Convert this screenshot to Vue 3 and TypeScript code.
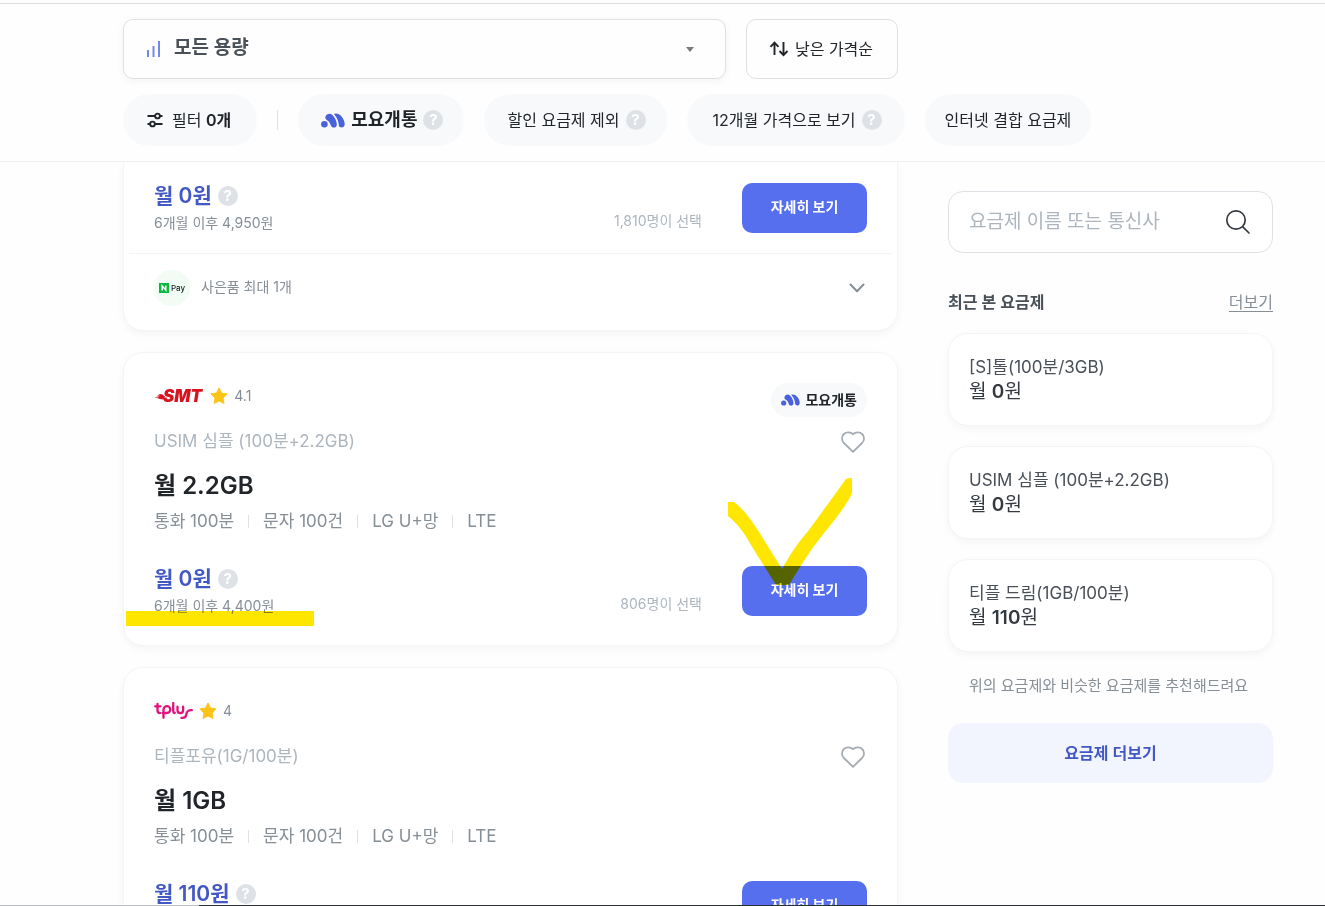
<script setup lang="ts">
import { ref } from 'vue'

interface Plan {
  brand: 'smt' | 'tplus'
  rating: string
  name: string
  data: string
  specs: string[]
  price: string
  after: string
  chosen: string
  moyo: boolean
}

const query = ref('')
const capacity = ref('all')

const plans: Plan[] = [
  {
    brand: 'smt', rating: '4.1', name: 'USIM 심플 (100분+2.2GB)', data: '월 2.2GB',
    specs: ['통화 100분', '문자 100건', 'LG U+망', 'LTE'],
    price: '월 0원', after: '6개월 이후 4,400원', chosen: '806명이 선택', moyo: true,
  },
  {
    brand: 'tplus', rating: '4', name: '티플포유(1G/100분)', data: '월 1GB',
    specs: ['통화 100분', '문자 100건', 'LG U+망', 'LTE'],
    price: '월 110원', after: '', chosen: '', moyo: false,
  },
]

const recent = [
  { name: '[S]톨(100분/3GB)', price: '0' },
  { name: 'USIM 심플 (100분+2.2GB)', price: '0' },
  { name: '티플 드림(1GB/100분)', price: '110' },
]
</script>

<template>
  <div class="page">
    <svg class="defs" aria-hidden="true">
      <symbol id="moyo" viewBox="0 0 24 15">
        <circle cx="3.400" cy="11.300" r="3.300" />
        <path d="M4.500 3.500C5.600.8 8.700-.2 10.900 1.600C13.600 3.900 16 8.500 15.800 11.700C15.700 15 11.200 15.700 10 12.800C9 10.200 8.300 8.500 6 7.200C4.500 6.300 4 5 4.500 3.500Z" />
        <path d="M12.900 1C14.200.1 16.300.4 18.200 1.500C21.300 3.400 23.700 7.600 23.700 11.200C23.700 14.500 19.600 15.600 17.900 13C17.900 9.400 16.500 5 12.900 1Z" />
      </symbol>
      <symbol id="heart" viewBox="0 0 24 22">
        <path d="M12 20.800L2.900 12C.4 9.400.4 5.300 2.800 3C5.300.6 9.700.8 12 3.200C14.300.8 18.700.6 21.200 3C23.600 5.300 23.600 9.400 21.100 12Z" fill="none" stroke="currentColor" stroke-width="1.800" stroke-linejoin="round" />
      </symbol>
    </svg>

    <header class="filters">
      <div class="row">
        <div class="capacity">
          <svg width="15" height="16" viewBox="0 0 15 16" aria-hidden="true">
            <path d="M2 9v7M7.500 5v11M13 0v16" stroke="#7489ee" stroke-width="2" />
          </svg>
          <select v-model="capacity" aria-label="용량">
            <option value="all">모든 용량</option>
          </select>
          <svg class="caret" width="8" height="5" viewBox="0 0 8 5" aria-hidden="true"><path d="M0 0h8L4 5Z" fill="#777b80" /></svg>
        </div>
        <button class="sort" type="button">
          <svg width="20" height="16" viewBox="0 0 20 16" fill="none" stroke="#212529" stroke-width="1.900" aria-hidden="true">
            <path d="M5.500 14V1.800M1.500 5.800l4-4.200 4 4.200M14.500 1v13.200M10.500 10l4 4.200 4-4.200" />
          </svg>
          낮은 가격순
        </button>
      </div>
      <div class="row chips">
        <button class="chip filter" type="button">
          <svg width="16" height="16" viewBox="0 0 16 16" fill="none" stroke="#212529" stroke-width="1.900" aria-hidden="true">
            <path d="M.5 4h7.500M13 4h2.500M.5 12h2.500M8 12h7.500" /><circle cx="10.500" cy="4" r="2.400" /><circle cx="5.500" cy="12" r="2.400" />
          </svg>
          <span>필터 <b>0개</b></span>
        </button>
        <span class="bar"></span>
        <button class="chip" type="button">
          <svg class="mark" width="24" height="15" aria-hidden="true"><use href="#moyo" /></svg>
          <b class="moyo-name">모요개통</b><i class="help">?</i>
        </button>
        <button class="chip" type="button">할인 요금제 제외<i class="help">?</i></button>
        <button class="chip wide" type="button">12개월 가격으로 보기<i class="help">?</i></button>
        <button class="chip plain" type="button">인터넷 결합 요금제</button>
      </div>
    </header>

    <div class="content">
      <main>
        <article class="card continued">
          <div class="buy">
            <div class="cost">
              <p class="price">월 0원<i class="help">?</i></p>
              <p class="after">6개월 이후 4,950원</p>
            </div>
            <span class="chosen">1,810명이 선택</span>
            <button class="detail" type="button">자세히 보기</button>
          </div>
          <button class="gift" type="button">
            <span class="npay"><svg width="10" height="10" viewBox="0 0 10 10" aria-hidden="true"><path d="M0 0h10v10H0Z" fill="#09b83e" /><path d="M3.200 7.500V3L6.800 7V2.500" fill="none" stroke="#fff" stroke-width="1.500" /></svg>Pay</span>
            <span class="gift-text">사은품 최대 1개</span>
            <svg width="16" height="10" viewBox="0 0 16 10" fill="none" stroke="#868e96" stroke-width="2" stroke-linecap="round" stroke-linejoin="round" aria-hidden="true"><path d="M1.500 1.500L8 8.200l6.500-6.700" /></svg>
          </button>
        </article>

        <article v-for="(plan, i) in plans" :key="plan.name" class="card">
          <div class="brand">
            <span v-if="plan.brand === 'smt'" class="smt">
              <svg width="11" height="10" viewBox="0 0 11 10" fill="#d9121f" aria-hidden="true"><path d="M0 6.200L5 5.500L3 4.600L6 4.300L4.500 3L8 3.200L11 5.500L9.500 8.500L3 7.800L6 7Z" /></svg>SMT
            </span>
            <svg v-else width="39" height="18" viewBox="0 0 39 18" fill="none" stroke="#e0127c" stroke-width="2.300" stroke-linecap="round" stroke-linejoin="round" role="img" aria-label="tplus">
              <path d="M3.500 2V8.500Q3.500 11 6 11M1.200 4.300H6.500M9.500 15.800V7.600A3.400 3.400 0 1 1 12.900 11H8.500M19.200 1V8.500Q19.200 11 20.800 11M23.500 4.700V8.300A2.800 2.800 0 0 0 29.100 8.300V4.700" />
              <path d="M27.500 15.800C31 16.200 32 15 32.300 12.600C32.600 9.600 33.600 8 37.800 8.100" />
            </svg>
            <svg class="star" width="18" height="18" viewBox="0 0 18 18" aria-hidden="true"><path d="M9 1l2.500 5.100 5.600.8-4.100 4 1 5.600L9 13.900l-5 2.600 1-5.600-4.100-4 5.600-.8Z" fill="#fcc419" stroke="#fcc419" stroke-linejoin="round" /></svg>
            <span>{{ plan.rating }}</span>
          </div>
          <span v-if="plan.moyo" class="badge"><svg class="mark" width="19" height="12" aria-hidden="true"><use href="#moyo" /></svg>모요개통</span>
          <div class="name-row">
            <p>{{ plan.name }}</p>
            <button class="like" type="button" aria-label="찜하기"><svg width="24" height="22"><use href="#heart" /></svg></button>
          </div>
          <h2>{{ plan.data }}</h2>
          <ul class="specs"><li v-for="s in plan.specs" :key="s">{{ s }}</li></ul>
          <div class="buy">
            <div class="cost">
              <p class="price">{{ plan.price }}<i class="help">?</i></p>
              <p class="after">{{ plan.after }}</p>
            </div>
            <span class="chosen">{{ plan.chosen }}</span>
            <button class="detail" type="button">자세히 보기</button>
          </div>
          <template v-if="i === 0">
            <span class="underline-mark"></span>
            <svg class="check-mark" width="126" height="112" viewBox="0 0 126 112" aria-hidden="true">
              <path d="M1 24H7C18 32 28 47 37 62L55 91C64 75 70 66 82 52L119 1Q121 0 125 0V15C121 25 108 42 97 55C84 71 76 84 62 107H49L27 72C19 58 13 48 1 38Z" fill="#ffe600" />
            </svg>
          </template>
        </article>
      </main>

      <aside>
        <label class="search">
          <input v-model="query" type="text" placeholder="요금제 이름 또는 통신사" aria-label="요금제 검색" />
          <svg width="26" height="26" viewBox="0 0 26 26" fill="none" stroke="#343a40" stroke-width="1.700" stroke-linecap="round" aria-hidden="true"><circle cx="11" cy="11" r="9.200" /><path d="M17.800 17.800L24 24" /></svg>
        </label>
        <div class="recent-head"><h3>최근 본 요금제</h3><a href="#recent">더보기</a></div>
        <div id="recent" class="recent">
          <div v-for="r in recent" :key="r.name" class="recent-card">
            <p class="recent-name">{{ r.name }}</p>
            <p class="recent-price">월 <b>{{ r.price }}</b>원</p>
          </div>
        </div>
        <p class="hint">위의 요금제와 비슷한 요금제를 추천해드려요</p>
        <button class="more" type="button">요금제 더보기</button>
      </aside>
    </div>
    <div class="edge"></div>
  </div>
</template>

<style>
body { margin: 0; background: #fefefe; }
</style>

<style scoped>
.page, .page * { box-sizing: border-box; }
.page {
  display: flex;
  flex-direction: column;
  height: 100vh;
  overflow: hidden;
  padding-top: 3px;
  font-family: Inter, "Noto Sans CJK KR", sans-serif;
  font-size: 16px;
  line-height: 24px;
  color: #212529;
}
button, input, select { font: inherit; color: inherit; border: 0; background: none; padding: 0; margin: 0; }
button { cursor: pointer; }
p, h2, h3, ul { margin: 0; padding: 0; }
svg { flex: none; display: block; }
.defs { position: absolute; width: 0; height: 0; }
.mark { fill: #4a61dc; }

.filters {
  flex: none;
  display: flex;
  flex-direction: column;
  gap: 15px;
  padding: 15px 52px 15px 123px;
  border-top: 1px solid #dcdee0;
  border-bottom: 1px solid #eff0f2;
}
.row { display: flex; align-items: center; gap: 20px; }
.capacity {
  flex: 0 1 603px;
  display: flex;
  align-items: center;
  height: 60px;
  padding: 0 31px 0 22px;
  border: 1px solid #dee0e3;
  border-radius: 10px;
  box-shadow: 0 2px 8px rgba(0, 0, 0, 0.05);
}
.capacity select { flex: 1; appearance: none; margin-left: 13px; font-size: 19px; font-weight: 600; color: #495057; outline: 0; height: 58px; padding-bottom: 2px; }
.sort {
  display: flex;
  align-items: center;
  justify-content: center;
  gap: 6px;
  width: 152px;
  height: 60px;
  padding-right: 2px;
  border: 1px solid #dee0e3;
  border-radius: 10px;
}
.chip {
  display: flex;
  align-items: center;
  justify-content: center;
  height: 52px;
  padding: 0 21px 0 23px;
  border-radius: 26px;
  background: #f8f9fb;
  white-space: nowrap;
}
.chip.filter { gap: 9px; padding: 0 26px 0 24px; }
.chip.filter b { font-weight: 600; }
.chip.wide { padding: 0 23px 0 26px; }
.chip.plain { padding: 0 20px; }
.moyo-name { margin-left: 6px; font-size: 18px; font-weight: 700; }
.bar { width: 1px; height: 20px; background: #dee2e6; }
.help {
  display: inline-flex;
  align-items: center;
  justify-content: center;
  width: 20px;
  height: 20px;
  margin-left: 6px;
  border-radius: 50%;
  background: #dee2e6;
  color: #fff;
  font-size: 15px;
  line-height: 20px;
  font-weight: 700;
  font-style: normal;
}

.content { flex: 1; min-height: 0; overflow: hidden; display: flex; align-items: flex-start; gap: 50px; padding: 0 52px 0 123px; }
main { flex: 1; min-width: 0; display: flex; flex-direction: column; gap: 21px; }
.card {
  position: relative;
  padding: 30px 30px 27px;
  border: 1px solid #f4f5f6;
  border-radius: 20px;
  background: #fff;
  box-shadow: 0 3px 8px rgba(0, 0, 0, 0.04);
}
.continued { padding: 19px 0 0; border-top: 0; border-radius: 0 0 20px 20px; }
.continued .buy { padding: 0 30px; }
.buy { display: flex; align-items: flex-start; }
.cost { flex: 1; }
.price { display: flex; align-items: center; height: 30px; font-size: 21px; font-weight: 600; color: #4258c5; }
.after { height: 24px; font-size: 14px; color: #868e96; }
.chosen { margin: 28px 40px 0 0; font-size: 14px; line-height: 24px; color: #adb5bd; }
.detail {
  width: 125px;
  height: 50px;
  margin-top: 2px;
  padding-bottom: 2px;
  border-radius: 10px;
  background: #566fee;
  color: #fff;
  font-size: 14px;
  font-weight: 700;
}
.gift {
  display: flex;
  align-items: center;
  width: calc(100% - 10px);
  height: 77px;
  margin: 18px 5px 0;
  padding: 0 27px 8px 25px;
  border-top: 1px solid #f1f3f5;
  text-align: left;
}
.npay {
  display: flex;
  align-items: center;
  justify-content: center;
  gap: 2px;
  width: 36px;
  height: 36px;
  border-radius: 50%;
  background: #f1fcf4;
  font-size: 8px;
  font-weight: 500;
}
.gift-text { flex: 1; margin-left: 11px; padding-bottom: 3px; font-size: 14px; color: #868e96; }

.brand { display: flex; align-items: center; height: 26px; font-size: 14px; color: #868e96; }
.smt { display: flex; align-items: center; margin-right: 2px; color: #d9121f; font-size: 17px; font-weight: 900; font-style: italic; }
.smt svg { margin-right: -2px; }
.star { margin: 0 6px; }
.badge {
  position: absolute;
  top: 30px;
  right: 30px;
  display: flex;
  align-items: center;
  gap: 5px;
  height: 34px;
  padding: 0 10px;
  border-radius: 17px;
  background: #f8f9fb;
  font-size: 14px;
  font-weight: 600;
}
.name-row { display: flex; align-items: center; justify-content: space-between; height: 24px; margin-top: 20px; font-size: 17px; color: #adb5bd; }
.like { margin: 2px 2px 0 0; color: #a5abb2; }
h2 { height: 34px; margin-top: 16px; font-size: 24px; line-height: 34px; font-weight: 600; }
.specs { display: flex; height: 24px; margin-top: 6px; list-style: none; font-size: 17px; color: #868e96; }
.specs li { display: flex; align-items: center; }
.specs li + li::before { content: ""; width: 1px; height: 13px; margin: 0 14px; background: #dee2e6; }
.specs + .buy { margin-top: 31px; }
.underline-mark { position: absolute; left: 2px; top: 258px; width: 188px; height: 15px; background: #ffe600; mix-blend-mode: multiply; }
.check-mark { position: absolute; right: 44px; top: 125px; mix-blend-mode: multiply; pointer-events: none; }

aside { flex: none; width: 325px; padding-top: 29px; }
.search { display: flex; align-items: center; height: 62px; padding: 0 21px 0 20px; border: 1px solid #dee2e6; border-radius: 15px; background: #fff; }
.search input { flex: 1; min-width: 0; outline: 0; font-size: 19px; }
.search input::placeholder { color: #adb5bd; opacity: 1; }
.recent-head { display: flex; justify-content: space-between; align-items: center; height: 24px; margin-top: 37px; }
h3 { font-size: 16px; font-weight: 600; color: #495057; }
.recent-head a { color: #868e96; text-underline-offset: 3px; }
.recent { display: flex; flex-direction: column; gap: 20px; margin-top: 19px; }
.recent-card { height: 93px; padding: 21px 20px; border: 1px solid #f4f5f6; border-radius: 20px; background: #fff; box-shadow: 0 3px 8px rgba(0, 0, 0, 0.04); }
.recent-name { font-size: 17px; color: #495057; }
.recent-price { line-height: 26px; font-size: 19px; color: #343a40; }
.recent-price b { font-weight: 600; }
.hint { margin-top: 22px; padding-left: 21px; font-size: 15px; color: #868e96; white-space: nowrap; }
.more { width: 100%; height: 60px; margin-top: 25px; border-radius: 15px; background: #f2f5fd; color: #4258c5; font-weight: 600; }
.edge { flex: none; height: 1px; background: linear-gradient(to right, #bfc1c4 15%, #2b3036 15%); }
</style>
